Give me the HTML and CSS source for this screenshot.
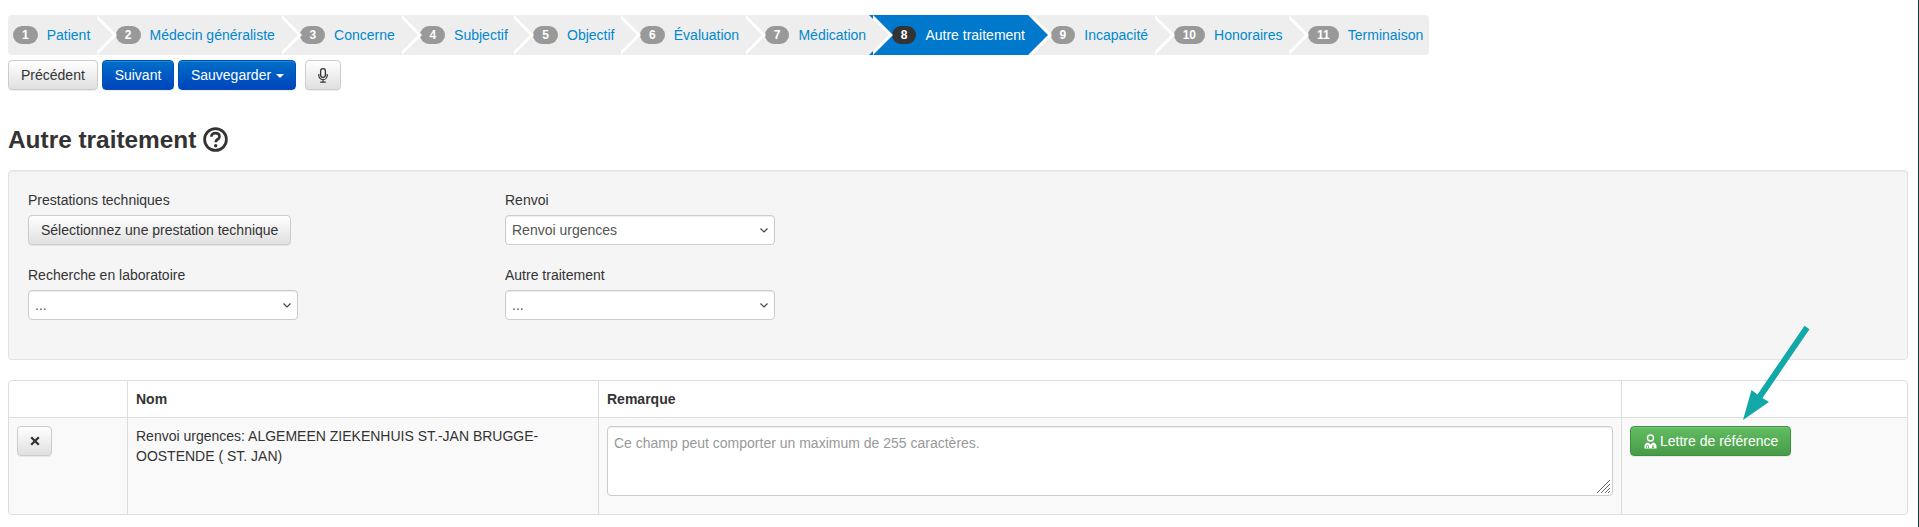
FILE: index.html
```html
<!DOCTYPE html>
<html lang="fr">
<head>
<meta charset="utf-8">
<title>Autre traitement</title>
<link rel="stylesheet" href="styles.css">
</head>
<body>
<ul class="wizard">
  <li class="step"><span class="badge">1</span><a class="step-link">Patient</a></li>
  <li class="step"><span class="badge">2</span><a class="step-link">Médecin généraliste</a></li>
  <li class="step"><span class="badge">3</span><a class="step-link">Concerne</a></li>
  <li class="step"><span class="badge">4</span><a class="step-link">Subjectif</a></li>
  <li class="step"><span class="badge">5</span><a class="step-link">Objectif</a></li>
  <li class="step"><span class="badge">6</span><a class="step-link">Évaluation</a></li>
  <li class="step"><span class="badge">7</span><a class="step-link">Médication</a></li>
  <li class="step active"><span class="badge">8</span><a class="step-link">Autre traitement</a></li>
  <li class="step"><span class="badge">9</span><a class="step-link">Incapacité</a></li>
  <li class="step"><span class="badge">10</span><a class="step-link">Honoraires</a></li>
  <li class="step last"><span class="badge">11</span><a class="step-link">Terminaison</a></li>
</ul>

<div class="actions">
  <button class="btn">Précédent</button>
  <button class="btn primary">Suivant</button>
  <button class="btn primary">Sauvegarder<span class="caret"></span></button>
  <button class="btn mic" aria-label="Micro">
    <svg class="mic-icon" width="10" height="15" viewBox="0 0 10 15">
      <rect x="2.6" y="0.7" width="4.8" height="8.6" rx="2.4" fill="none" stroke="#333" stroke-width="1.3"/>
      <path d="M0.8 6v1.4a4.2 4.2 0 0 0 8.4 0V6M5 11.6v2.4M2.2 14.2h5.6" fill="none" stroke="#333" stroke-width="1.2"/>
    </svg>
  </button>
</div>

<h1 class="title">Autre traitement
  <svg class="help" width="25" height="25" viewBox="0 0 25 25">
    <circle cx="12.5" cy="12.5" r="10.9" fill="none" stroke="#333" stroke-width="2.8"/>
    <path d="M8.4 9.8c0-2.3 1.8-3.700 4-3.700 2.400 0 4.100 1.400 4.100 3.400 0 1.500-.9 2.300-2 3-1.100.7-1.800 1.200-1.800 2.800" fill="none" stroke="#333" stroke-width="2.700"/>
    <circle cx="12.700" cy="18.700" r="1.700" fill="#333"/>
  </svg>
</h1>

<section class="well">
  <div class="form-grid">
    <div class="field">
      <label class="label">Prestations techniques</label>
      <button class="btn wide">Sélectionnez une prestation technique</button>
    </div>
    <div class="field">
      <label class="label">Renvoi</label>
      <select class="select"><option>Renvoi urgences</option></select>
    </div>
    <div class="field">
      <label class="label">Recherche en laboratoire</label>
      <select class="select"><option>...</option></select>
    </div>
    <div class="field">
      <label class="label">Autre traitement</label>
      <select class="select"><option>...</option></select>
    </div>
  </div>
</section>

<table class="table">
  <colgroup>
    <col class="col-a"><col class="col-b"><col class="col-c"><col class="col-d">
  </colgroup>
  <thead>
    <tr><th></th><th>Nom</th><th>Remarque</th><th></th></tr>
  </thead>
  <tbody>
    <tr>
      <td>
        <button class="btn close" aria-label="Supprimer">
          <svg width="10" height="10" viewBox="0 0 10 10"><path d="M1.200 1.200l7.600 7.600M8.800 1.200l-7.600 7.600" stroke="#333" stroke-width="2.300" fill="none"/></svg>
        </button>
      </td>
      <td>Renvoi urgences: ALGEMEEN ZIEKENHUIS ST.-JAN BRUGGE-OOSTENDE ( ST. JAN)</td>
      <td><textarea class="area" placeholder="Ce champ peut comporter un maximum de 255 caractères."></textarea></td>
      <td>
        <button class="btn success">
          <svg class="doc" width="15" height="15" viewBox="0 0 14 15">
            <circle cx="7" cy="4" r="3" fill="none" stroke="#fff" stroke-width="1.400"/>
            <path d="M1 14.500v-2.500c0-2 2-3.300 3.500-3.500l2.500 2 2.500-2c1.500.2 3.500 1.500 3.500 3.500v2.500z" fill="#fff"/>
            <path d="M3 14v-1.600a1 1 0 0 1 2 0V14M9.500 11v1.800" fill="none" stroke="#4fa64f" stroke-width=".9"/>
            <circle cx="9.500" cy="13.300" r=".9" fill="#4fa64f"/>
          </svg>Lettre de référence
        </button>
      </td>
    </tr>
  </tbody>
</table>

<svg class="arrow" width="80" height="110" viewBox="0 0 80 110">
  <path d="M69.500 5.800L74.500 9.200L27.500 78L34 82L8 100L16.500 70L22.500 74.500Z" fill="#12a8a8"/>
</svg>
</body>
</html>
```

FILE: styles.css
```css
* { box-sizing: border-box; }

html, body { margin: 0; height: 100%; }

body {
  position: relative;
  padding: 15px 10px 13px 8px;
  border-right: 1px solid #0b3f3d;
  background: #fff;
  color: #333;
  font-family: "Liberation Sans", Arial, sans-serif;
  font-size: 14px;
  line-height: 20px;
  overflow: hidden;
}

/* Wizard */
.wizard {
  display: flex;
  width: max-content;
  height: 40px;
  margin: 0;
  padding: 0;
  list-style: none;
  background: #eee;
  border-radius: 4px;
}

.step {
  position: relative;
  display: flex;
  align-items: center;
  height: 40px;
  padding: 0 2.7px 0 22.9px;
  white-space: nowrap;
}

.step:first-child { padding-left: 5px; border-radius: 4px 0 0 4px; }
.step.last { padding-right: 6px; }

.step:not(.last)::before,
.step:not(.last)::after {
  content: "";
  position: absolute;
  top: 0;
  border-style: solid;
  border-width: 20px 0 20px 20px;
  border-color: transparent;
}

.step:not(.last)::before { left: calc(100% + 4px); border-left-color: #fff; z-index: 1; }
.step:not(.last)::after { left: 100%; border-left-color: #eee; z-index: 2; }

.step.active { background: #0078cc; }
.step.active::after { border-left-color: #0078cc; }
.step.active .step-link { color: #fff; }
.step.active .badge { background: #333; }

.badge {
  height: 18px;
  padding: 0 9px;
  margin-right: 9px;
  border-radius: 9px;
  background: #999;
  color: #fff;
  font-size: 12px;
  font-weight: 700;
  line-height: 18px;
}

.step-link { color: #0088d0; }

/* Buttons */
.actions { display: flex; gap: 4px; margin-top: 5px; }

.btn {
  height: 30px;
  padding: 0 12px;
  border: 1px solid #ccc;
  border-radius: 4px;
  background: linear-gradient(#fff, #e0e0e0);
  box-shadow: inset 0 1px 0 rgba(255,255,255,.15), 0 1px 1px rgba(0,0,0,.075);
  color: #333;
  font: inherit;
  white-space: nowrap;
}

.btn.primary {
  padding: 0 11.8px;
  border-color: #0050b8;
  background: linear-gradient(#0070c8, #0044bc);
  color: #fff;
}

.btn.mic { width: 36px; margin-left: 5px; padding: 0; display: flex; align-items: center; justify-content: center; }

.caret {
  display: inline-block;
  margin-left: 4.500px;
  vertical-align: middle;
  border-top: 4px solid #fff;
  border-left: 4px solid transparent;
  border-right: 4px solid transparent;
}

.title {
  display: flex;
  align-items: center;
  gap: 7px;
  height: 27px;
  margin: 36px 0 17px;
  font-size: 24.4px;
  font-weight: 700;
  line-height: 27px;
}

.help { flex: none; }

/* Well */
.well {
  height: 190px;
  padding: 19px;
  border: 1px solid #e3e3e3;
  border-radius: 4px;
  background: #f5f5f5;
  box-shadow: inset 0 1px 1px rgba(0,0,0,.05);
}

.form-grid {
  display: grid;
  grid-template-columns: 477px 270px;
  row-gap: 20px;
}

.field { display: flex; flex-direction: column; align-items: flex-start; }
.label { margin-bottom: 5px; }
.btn.wide { padding: 0 12px; }

.select {
  appearance: none;
  width: 270px;
  height: 30px;
  padding: 4px 20px 4px 6px;
  border: 1px solid #ccc;
  border-radius: 4px;
  background-color: #fff;
  background-image: url("data:image/svg+xml,%3Csvg xmlns='http://www.w3.org/2000/svg' width='8' height='5'%3E%3Cpath d='M.5.5L4 4L7.500.5' fill='none' stroke='%23444' stroke-width='1.200'/%3E%3C/svg%3E");
  background-repeat: no-repeat;
  background-position: right 6px center;
  box-shadow: inset 0 1px 1px rgba(0,0,0,.075);
  color: #555;
  font: inherit;
}

/* Table */
.table {
  width: 100%;
  margin-top: 20px;
  border: 1px solid #ddd;
  border-spacing: 0;
  border-collapse: separate;
  border-radius: 4px;
  table-layout: fixed;
}

.col-a { width: 118px; }
.col-b { width: 471px; }
.col-c { width: 1023px; }

.table th, .table td {
  padding: 8px;
  vertical-align: top;
  text-align: left;
}

.table th { height: 36px; font-weight: 700; border-bottom: 1px solid #ddd; }
.table td { background: #f9f9f9; }
.table tbody td:first-child { border-radius: 0 0 0 4px; }
.table tbody td:last-child { border-radius: 0 0 4px 0; }
.table th + th, .table td + td { border-left: 1px solid #ddd; }

.btn.close {
  display: flex;
  align-items: center;
  justify-content: center;
  width: 35px;
  padding: 0;
}

.area {
  display: block;
  width: 100%;
  height: 70px;
  margin-bottom: 10px;
  padding: 6px;
  border: 1px solid #ccc;
  border-radius: 4px;
  resize: none;
  background-color: #fff;
  background-image: url("data:image/svg+xml,%3Csvg xmlns='http://www.w3.org/2000/svg' width='15' height='15'%3E%3Cpath d='M1 14L14 1M5 14L14 5M9 14L14 9M12 14L14 12' fill='none' stroke='%23666' stroke-width='1'/%3E%3C/svg%3E");
  background-repeat: no-repeat;
  background-position: right 1px bottom 1px;
  box-shadow: inset 0 1px 1px rgba(0,0,0,.075);
  font: inherit;
  color: #555;
}

.area::placeholder { color: #999; opacity: 1; }

.btn.success {
  display: flex;
  align-items: center;
  width: 161px;
  padding: 0 12px;
  border-color: #3e8f3e;
  background: linear-gradient(#62bd62, #479c47);
  color: #fff;
}

.doc { flex: none; margin-right: 2px; }

/* Annotation arrow over the page */
.arrow {
  position: absolute;
  left: 1735px;
  top: 320px;
}
```
